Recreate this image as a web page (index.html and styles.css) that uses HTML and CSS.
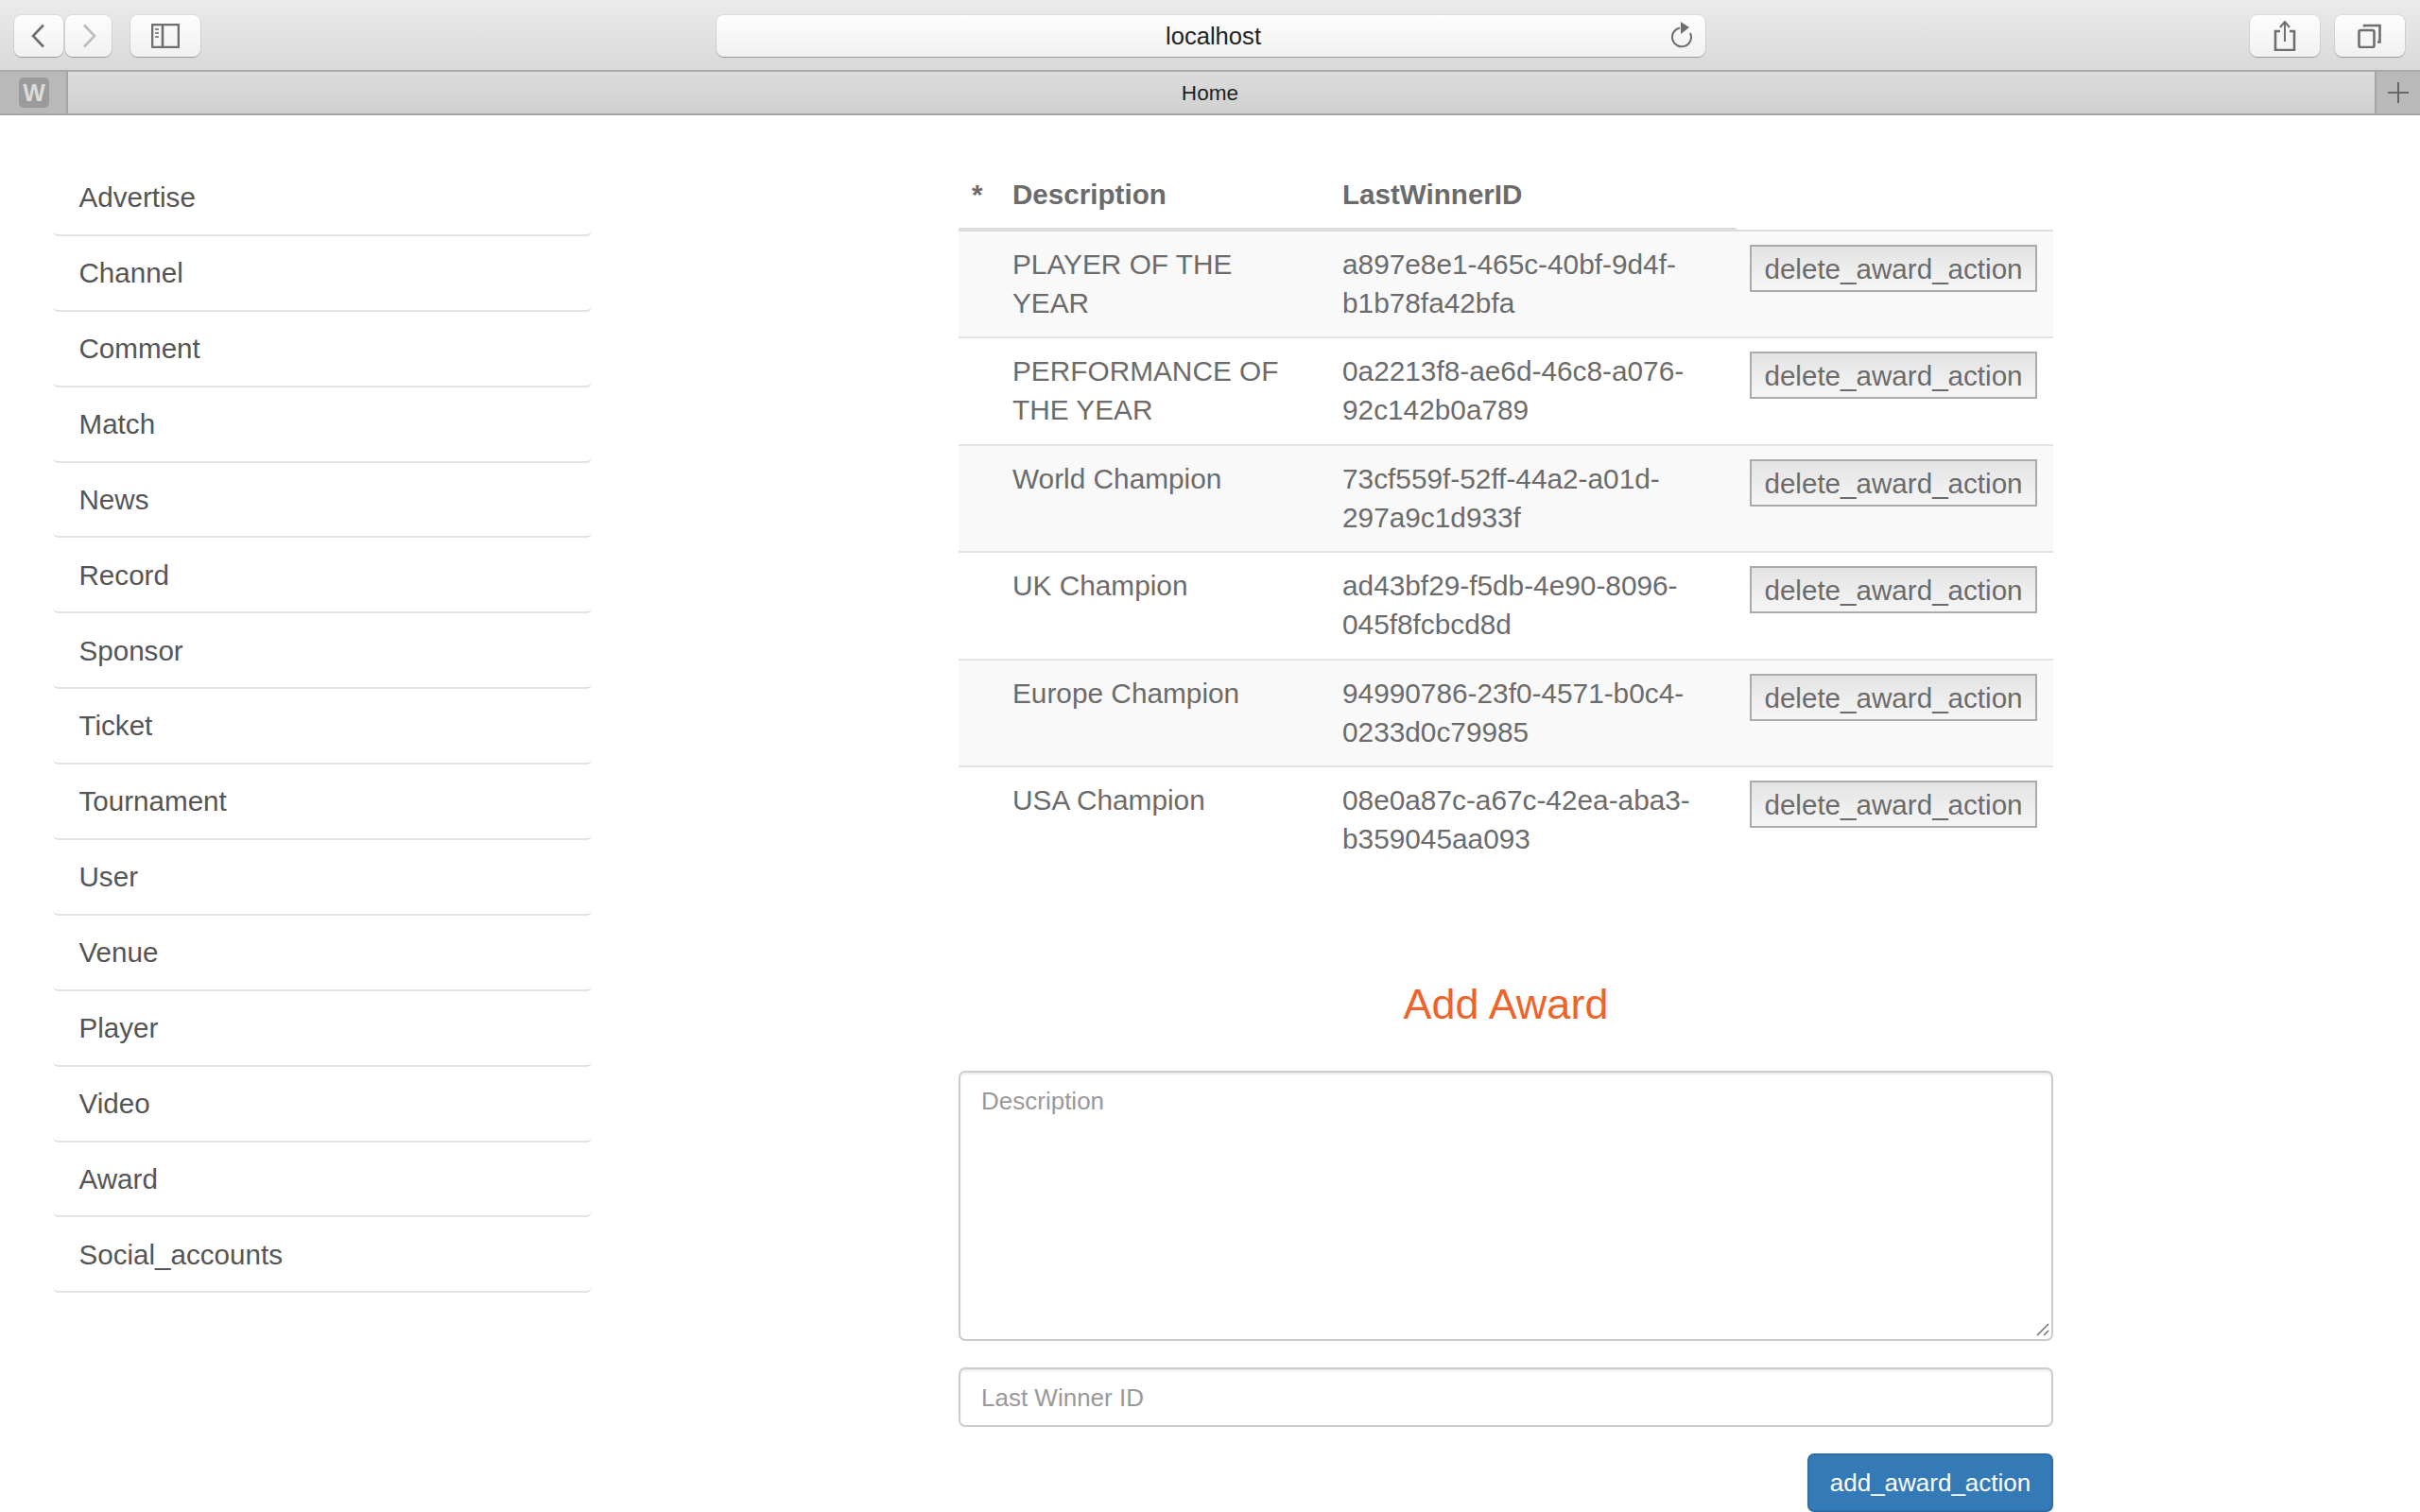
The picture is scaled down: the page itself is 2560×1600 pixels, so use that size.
FILE: index.html
```html
<!DOCTYPE html>
<html lang="en">
<head>
<meta charset="utf-8">
<title>Home</title>
<link rel="stylesheet" href="styles.css">
</head>
<body>
<header class="toolbar">
  <div class="tool-group">
    <div class="nav-pair">
      <div class="tool-btn nav-btn back"><svg width="16" height="26" viewBox="0 0 16 26"><path d="M14 1.5 3 13l11 11.5" class="ic"/></svg></div>
      <div class="tool-btn nav-btn forward"><svg width="16" height="26" viewBox="0 0 16 26"><path d="M2 1.5 13 13 2 24.5" class="ic-off"/></svg></div>
    </div>
    <div class="tool-btn side-btn"><svg width="30" height="26" viewBox="0 0 30 26"><rect x="1" y="1" width="28" height="24" rx="1" class="ic"/><path d="M12 1v24" class="ic"/><path d="M4 6h4M4 10h4M4 14h4" class="ic-dots"/></svg></div>
  </div>
  <div class="url-bar"><span class="url-text">localhost</span>
    <svg class="reload" width="24" height="28" viewBox="0 0 24 28"><path d="M9 6.5A10 10 0 1 0 20 12" class="ic-thin"/><path d="M10 0l9 6-9 7z" class="ic-fill"/></svg>
  </div>
  <div class="tool-right">
    <div class="tool-btn wide-btn"><svg width="24" height="32" viewBox="0 0 24 32"><path d="M7 11H2v20h20V11h-5" class="ic"/><path d="M12 22V2M7 7l5-6 5 6" class="ic-thin"/></svg></div>
    <div class="tool-btn wide-btn"><svg width="26" height="26" viewBox="0 0 26 26"><rect x="1.500" y="7" width="16" height="18" rx="2" class="ic"/><path d="M7 3.500V2h16.500v17.500H21" class="ic"/></svg></div>
  </div>
</header>
<nav class="tabbar">
  <div class="tab-side tab-w"><span class="favicon">W</span></div>
  <div class="tab-title">Home</div>
  <div class="tab-side tab-plus"><svg width="24" height="24" viewBox="0 0 24 24"><path d="M12 1v22M1 12h22" class="ic-plus"/></svg></div>
</nav>
<main class="page">
  <ul class="side-list">
    <li class="side-item">Advertise</li>
    <li class="side-item">Channel</li>
    <li class="side-item">Comment</li>
    <li class="side-item">Match</li>
    <li class="side-item">News</li>
    <li class="side-item">Record</li>
    <li class="side-item">Sponsor</li>
    <li class="side-item">Ticket</li>
    <li class="side-item">Tournament</li>
    <li class="side-item">User</li>
    <li class="side-item">Venue</li>
    <li class="side-item">Player</li>
    <li class="side-item">Video</li>
    <li class="side-item">Award</li>
    <li class="side-item">Social_accounts</li>
  </ul>
  <section class="content">
    <table class="awards">
      <colgroup><col class="c1"><col class="c2"><col class="c3"><col class="c4"></colgroup>
      <thead><tr><th class="th-star">*</th><th>Description</th><th>LastWinnerID</th><th class="th-last"></th></tr></thead>
      <tbody>
        <tr><td></td><td>PLAYER OF THE YEAR</td><td>a897e8e1-465c-40bf-9d4f-b1b78fa42bfa</td><td class="td-action"><button class="del-btn">delete_award_action</button></td></tr>
        <tr><td></td><td>PERFORMANCE OF THE YEAR</td><td>0a2213f8-ae6d-46c8-a076-92c142b0a789</td><td class="td-action"><button class="del-btn">delete_award_action</button></td></tr>
        <tr><td></td><td>World Champion</td><td>73cf559f-52ff-44a2-a01d-297a9c1d933f</td><td class="td-action"><button class="del-btn">delete_award_action</button></td></tr>
        <tr><td></td><td>UK Champion</td><td>ad43bf29-f5db-4e90-8096-045f8fcbcd8d</td><td class="td-action"><button class="del-btn">delete_award_action</button></td></tr>
        <tr><td></td><td>Europe Champion</td><td>94990786-23f0-4571-b0c4-0233d0c79985</td><td class="td-action"><button class="del-btn">delete_award_action</button></td></tr>
        <tr><td></td><td>USA Champion</td><td>08e0a87c-a67c-42ea-aba3-b359045aa093</td><td class="td-action"><button class="del-btn">delete_award_action</button></td></tr>
      </tbody>
    </table>
    <h2 class="add-title">Add Award</h2>
    <form class="add-form">
      <div class="area-wrap">
        <textarea class="field field-area" placeholder="Description"></textarea>
        <svg class="grip" width="14" height="14" viewBox="0 0 14 14"><path d="M1 13 13 1M8 13l5-5" class="ic-grip"/></svg>
      </div>
      <input class="field field-line" type="text" placeholder="Last Winner ID">
      <button class="add-btn" type="button">add_award_action</button>
    </form>
  </section>
</main>
</body>
</html>
```

FILE: styles.css
```css
* { box-sizing: border-box; }
html, body { margin: 0; height: 1600px; overflow: hidden; background: #fff; }
body { font-family: "Liberation Sans", Arial, sans-serif; color: #666; }

.toolbar {
  height: 76px;
  padding: 16px 16px 0 15px;
  display: flex;
  align-items: flex-start;
  background: linear-gradient(#ebebeb, #d9d9d9);
  border-bottom: 2px solid #a9a9a9;
}
.tool-group { display: flex; gap: 20px; width: 743px; }
.nav-pair { display: flex; gap: 2px; }
.tool-btn {
  height: 44px;
  display: flex;
  align-items: center;
  justify-content: center;
  background: linear-gradient(#fdfdfd, #f1f1f1);
  border-radius: 8px;
  box-shadow: 0 1px 1px rgba(0,0,0,.28), 0 0 0 1px rgba(0,0,0,.05);
}
.nav-btn { width: 52px; }
.back svg { margin-right: 3px; }
.forward { width: 49px; }
.forward svg { margin-left: 3px; }
.side-btn { width: 74px; }
.wide-btn { width: 74px; }
.url-bar {
  width: 1046px;
  height: 44px;
  position: relative;
  display: flex;
  align-items: center;
  justify-content: center;
  background: linear-gradient(#fdfdfd, #f1f1f1);
  border-radius: 8px;
  box-shadow: 0 1px 1px rgba(0,0,0,.28), 0 0 0 1px rgba(0,0,0,.05);
}
.url-text { font-size: 25.600px; color: #222; margin: 1px 0 0 5px; }
.reload { position: absolute; right: 12px; top: 7px; }
.tool-right { margin-left: auto; display: flex; gap: 16px; }
.ic { fill: none; stroke: #6e6e6e; stroke-width: 2.600; }
.ic-off { fill: none; stroke: #bdbdbd; stroke-width: 2.600; }
.ic-thin { fill: none; stroke: #6e6e6e; stroke-width: 2; }
.ic-fill { fill: #6e6e6e; }
.ic-dots { fill: none; stroke: #8a8a8a; stroke-width: 2; }
.ic-plus { fill: none; stroke: #666; stroke-width: 2; }
.ic-grip { fill: none; stroke: #777; stroke-width: 1.600; }

.tabbar {
  height: 46px;
  display: flex;
  background: linear-gradient(#dcdcdc, #d0d0d0);
  border-bottom: 2px solid #a4a4a4;
}
.tab-side {
  background: #b9b9b9;
  display: flex;
  align-items: center;
  justify-content: center;
}
.tab-w { width: 72px; border-right: 2px solid #a4a4a4; }
.tab-plus { width: 48px; border-left: 2px solid #a4a4a4; }
.favicon {
  width: 32px;
  height: 32px;
  margin-left: 2px;
  border-radius: 5px;
  background: #9b9b9b;
  color: #dcdcdc;
  font-weight: 700;
  font-size: 25px;
  line-height: 32px;
  text-align: center;
}
.tab-title {
  flex: 1;
  padding-right: 24px;
  text-align: center;
  font-size: 22.600px;
  line-height: 45px;
  color: #222;
}

.page {
  display: flex;
  align-items: flex-start;
  padding: 48px 0 0 56px;
}
.side-list {
  width: 570px;
  margin: 0 388px 0 0;
  padding: 0;
  list-style: none;
}
.side-item {
  height: 79.900px;
  padding: 18.200px 27.500px 0;
  font-size: 29.600px;
  line-height: 41px;
  color: #555;
  border-bottom: 2px solid #e2e2e2;
  border-radius: 0 0 6px 6px;
}

.content { width: 1158px; }
.awards {
  width: 100%;
  table-layout: fixed;
  border-collapse: separate;
  border-spacing: 0;
  font-size: 29.800px;
  line-height: 41px;
  color: #6b6b6b;
}
.c1 { width: 41px; }
.c2 { width: 349px; }
.c3 { width: 433px; }
.c4 { width: 335px; }
.awards th {
  text-align: left;
  vertical-align: bottom;
  padding: 15px 16px;
  border-bottom: 4px solid #ddd;
  font-size: 29.600px;
}
.awards .th-star { padding-left: 14px; }
.awards .th-last { border-bottom-width: 2px; }
.awards td {
  vertical-align: top;
  padding: 14px 16px 15.500px;
  border-top: 2px solid #e3e3e3;
}
.awards tbody tr:first-child td { border-top: 0; padding-bottom: 15px; }
.awards tbody tr:nth-child(odd) td { background: #f9f9f9; }
.awards .td-action { padding-left: 14px; }
.del-btn {
  display: block;
  width: 304px;
  height: 50px;
  padding: 1px 0 0;
  font: 29.600px/46px "Liberation Sans", Arial, sans-serif;
  color: #6b6b6b;
  background: linear-gradient(#e3e3e3, #f6f6f6);
  border: 2px solid #ababab;
  border-radius: 0;
}

.add-title {
  margin: 109px 0 40px;
  font-size: 45px;
  font-weight: 400;
  line-height: 60px;
  text-align: center;
  color: #ee632b;
}
.add-form { display: flex; flex-direction: column; }
.area-wrap { position: relative; margin-bottom: 28px; }
.grip { position: absolute; right: 4px; bottom: 5px; pointer-events: none; }
.field {
  display: block;
  width: 100%;
  font: 26px/37px "Liberation Sans", Arial, sans-serif;
  color: #555;
  background: #fff;
  border: 2px solid #ccc;
  border-radius: 7px;
  box-shadow: inset 0 2px 2px rgba(0,0,0,.075);
  outline: 0;
}
.field::placeholder { color: #999; opacity: 1; }
.field-area { height: 286px; padding: 12px 22px; resize: none; }
.field-line { height: 63px; padding: 12px 22px 10px; margin-bottom: 28px; }
.add-btn {
  align-self: flex-end;
  width: 260px;
  height: 62px;
  padding: 2px 0 0;
  font: 26px/37px "Liberation Sans", Arial, sans-serif;
  color: #fff;
  background: #337ab7;
  border: 2px solid #2e6da4;
  border-radius: 7px;
}
```
